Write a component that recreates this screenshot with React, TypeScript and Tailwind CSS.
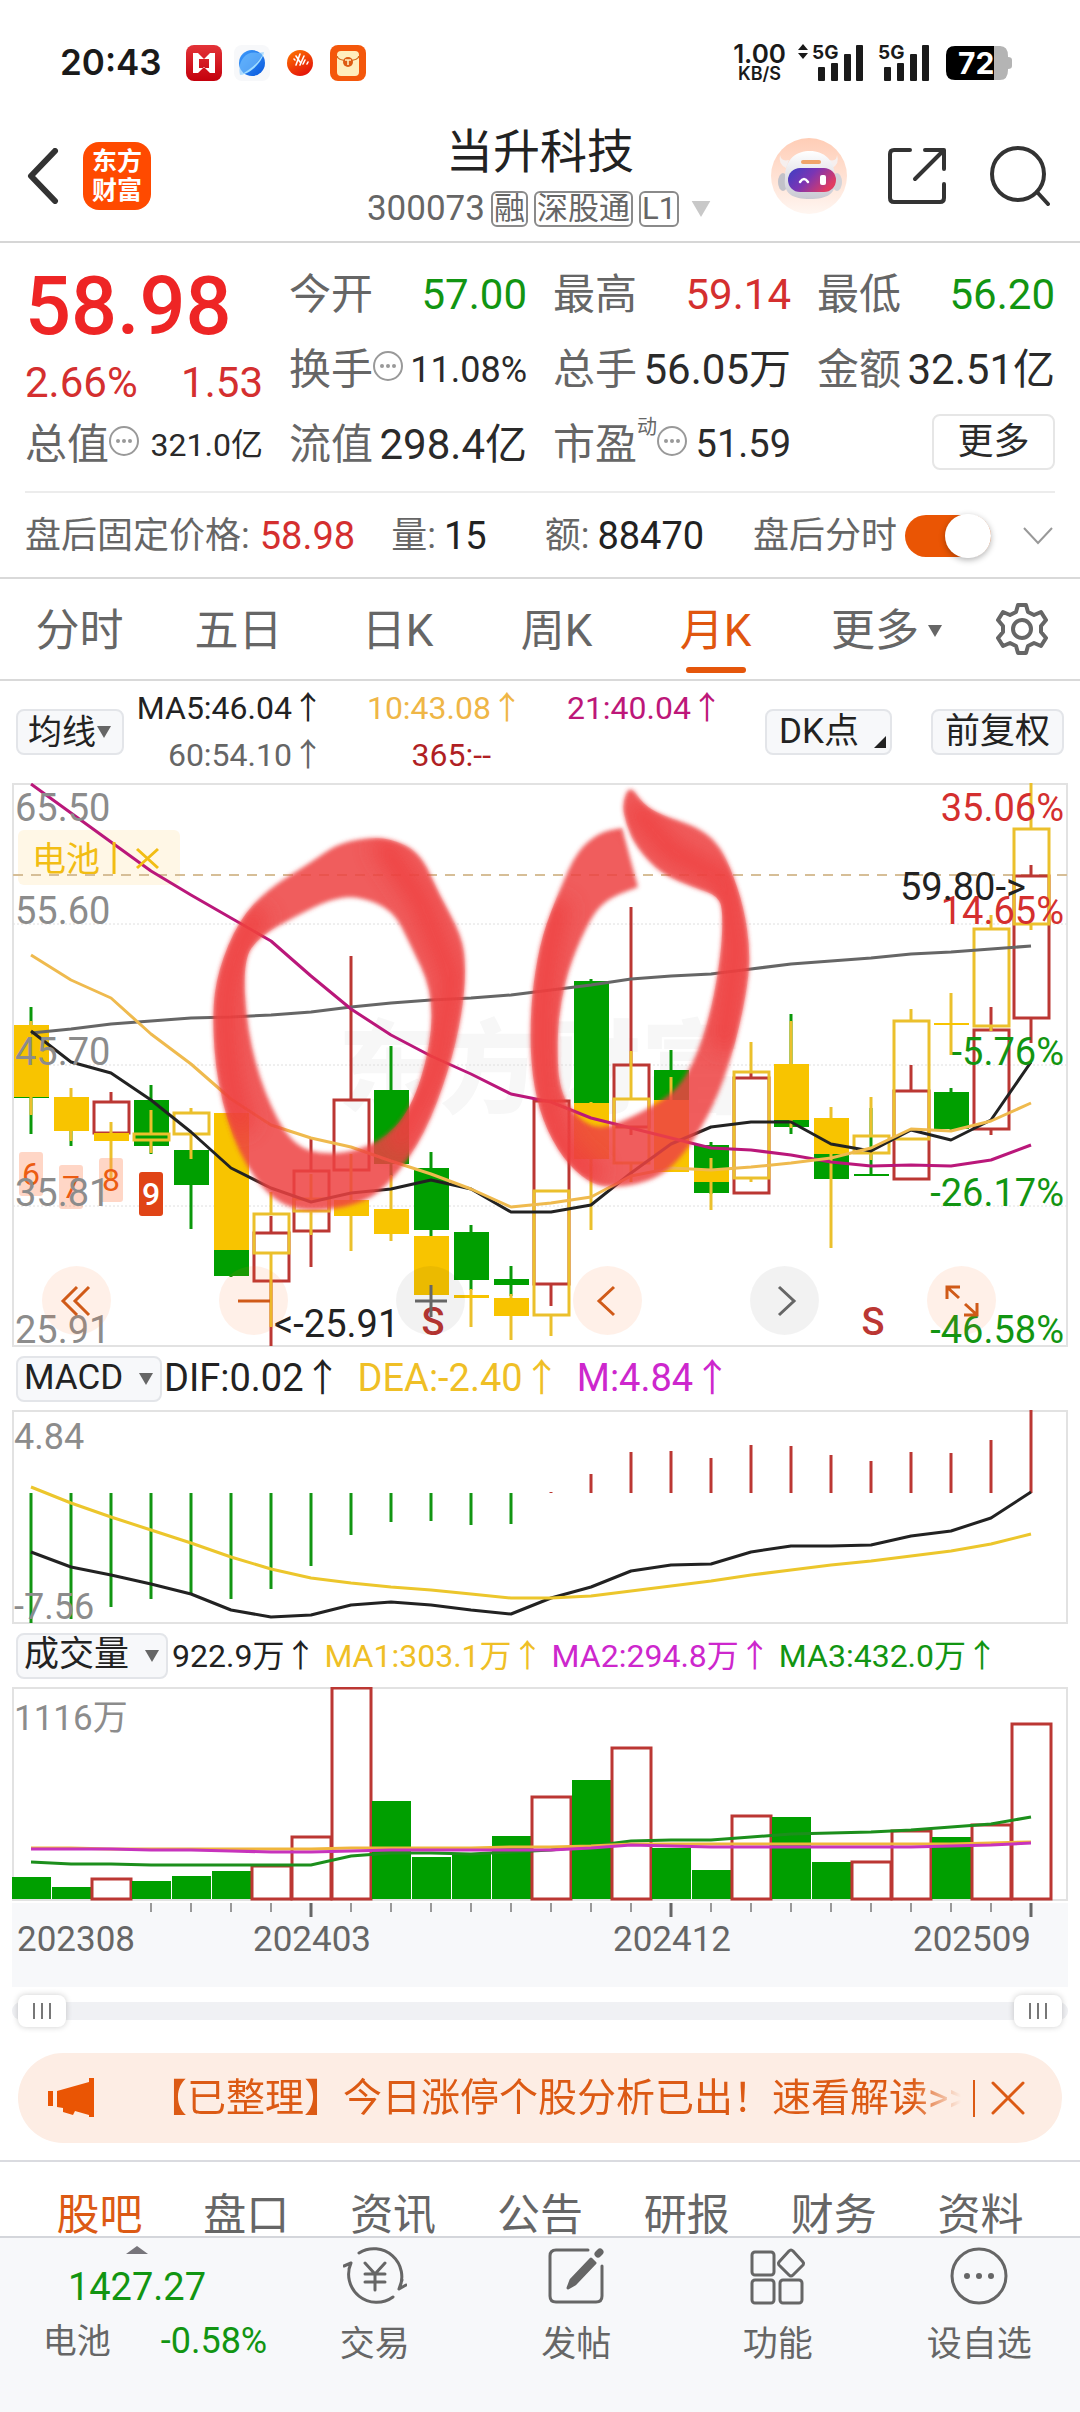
import { type ReactNode } from 'react';

type Point = [number, number];

/* ---------- chart data, in chart units: one candle every 40 units ---------- */

const FIRST_X = 31;
const STEP = 40;
const cx = (i: number) => FIRST_X + i * STEP;

const series = (ys: number[]) => ys.map((y, i) => `${cx(i)},${y}`).join(' ');

type Kind = 'up' | 'down';
// [index, kind, high, bodyTop, bodyBottom, low]
type Candle = [number, Kind, number, number, number, number];

const stock: Candle[] = [
  [0, 'down', 1007, 1035, 1098, 1134],
  [1, 'down', 1100, 1105, 1130, 1146],
  [2, 'up', 1092, 1102, 1133, 1133],
  [3, 'down', 1085, 1100, 1146, 1154],
  [4, 'down', 1150, 1150, 1185, 1229],
  [5, 'down', 1200, 1200, 1276, 1277],
  [6, 'up', 1216, 1233, 1281, 1346],
  [7, 'up', 1139, 1171, 1231, 1267],
  [8, 'up', 956, 1100, 1170, 1170],
  [9, 'down', 1046, 1090, 1164, 1176],
  [10, 'down', 1152, 1168, 1230, 1236],
  [11, 'down', 1225, 1232, 1280, 1290],
  [12, 'down', 1266, 1279, 1285, 1296],
  [13, 'up', 1101, 1101, 1284, 1306],
  [14, 'down', 979, 981, 1110, 1110],
  [15, 'up', 907, 1065, 1127, 1135],
  [16, 'down', 1050, 1070, 1110, 1110],
  [17, 'down', 1142, 1145, 1193, 1194],
  [18, 'up', 1072, 1078, 1193, 1194],
  [19, 'down', 1014, 1070, 1127, 1134],
  [20, 'down', 1120, 1120, 1179, 1179],
  [21, 'down', 1108, 1174, 1176, 1176],
  [22, 'up', 1065, 1091, 1179, 1180],
  [23, 'down', 1088, 1092, 1129, 1130],
  [24, 'up', 1007, 1030, 1129, 1135],
  [25, 'up', 865, 876, 1018, 1043],
];

const sector: Candle[] = [
  [0, 'down', 1021, 1025, 1097, 1115],
  [1, 'down', 1088, 1097, 1131, 1141],
  [2, 'down', 1122, 1133, 1141, 1179],
  [3, 'up', 1110, 1134, 1140, 1153],
  [4, 'up', 1108, 1113, 1134, 1159],
  [5, 'down', 1113, 1113, 1250, 1250],
  [6, 'up', 1192, 1214, 1253, 1327],
  [7, 'up', 1174, 1199, 1211, 1235],
  [8, 'down', 1154, 1200, 1216, 1251],
  [9, 'down', 1175, 1209, 1234, 1241],
  [10, 'down', 1236, 1236, 1295, 1295],
  [11, 'down', 1289, 1295, 1298, 1327],
  [12, 'down', 1294, 1298, 1316, 1340],
  [13, 'up', 1191, 1191, 1315, 1336],
  [14, 'down', 1102, 1103, 1159, 1230],
  [15, 'up', 1051, 1099, 1163, 1182],
  [16, 'down', 1077, 1100, 1172, 1172],
  [17, 'down', 1158, 1170, 1182, 1210],
  [18, 'up', 1042, 1072, 1178, 1182],
  [19, 'down', 1021, 1064, 1120, 1128],
  [20, 'down', 1107, 1118, 1154, 1248],
  [21, 'up', 1097, 1136, 1153, 1160],
  [22, 'up', 1009, 1021, 1139, 1139],
  [23, 'down', 993, 1023, 1025, 1055],
  [24, 'up', 915, 929, 1026, 1031],
  [25, 'up', 783, 829, 924, 930],
];

const ma5 = [1031, 1062, 1073, 1100, 1132, 1168, 1188, 1202, 1193, 1189, 1180, 1189, 1212, 1212, 1205, 1173, 1144, 1127, 1122, 1122, 1144, 1151, 1130, 1140, 1120, 1062];
const ma10 = [955, 980, 998, 1034, 1064, 1099, 1125, 1138, 1147, 1161, 1174, 1189, 1207, 1203, 1197, 1176, 1168, 1170, 1167, 1163, 1158, 1148, 1129, 1131, 1121, 1103];
const ma21 = [784, 813, 842, 871, 895, 918, 941, 976, 1009, 1035, 1056, 1074, 1094, 1102, 1118, 1128, 1138, 1148, 1150, 1155, 1162, 1166, 1165, 1166, 1160, 1145];
const ma60 = [1033, 1029, 1024, 1021, 1018, 1017, 1015, 1012, 1007, 1003, 1000, 998, 995, 990, 985, 979, 976, 974, 969, 964, 961, 958, 954, 952, 949, 946];

const macdBars = [1623, 1619, 1607, 1599, 1594, 1599, 1589, 1566, 1535, 1522, 1521, 1525, 1524, 1492, 1474, 1452, 1451, 1458, 1445, 1446, 1455, 1461, 1452, 1453, 1440, 1410];
const dif = [1552, 1567, 1575, 1584, 1594, 1610, 1617, 1615, 1605, 1602, 1605, 1610, 1614, 1598, 1587, 1571, 1565, 1564, 1552, 1546, 1546, 1545, 1536, 1531, 1518, 1492];
const dea = [1487, 1503, 1517, 1530, 1543, 1557, 1569, 1578, 1583, 1587, 1590, 1594, 1598, 1598, 1596, 1591, 1586, 1581, 1575, 1570, 1565, 1561, 1556, 1551, 1544, 1534];

const volumes: [number, Kind][] = [
  [1877, 'down'], [1887, 'down'], [1879, 'up'], [1881, 'down'], [1876, 'down'], [1871, 'down'], [1866, 'up'],
  [1837, 'up'], [1688, 'up'], [1801, 'down'], [1857, 'down'], [1854, 'down'], [1836, 'down'], [1797, 'up'],
  [1780, 'down'], [1748, 'up'], [1848, 'down'], [1870, 'down'], [1816, 'up'], [1817, 'down'], [1862, 'down'],
  [1862, 'up'], [1831, 'up'], [1837, 'down'], [1825, 'up'], [1724, 'up'],
];
const vma1 = [1848, 1848, 1849, 1849, 1849, 1849, 1849, 1849, 1848, 1848, 1848, 1848, 1847, 1847, 1846, 1844, 1844, 1844, 1844, 1844, 1844, 1844, 1844, 1844, 1843, 1842];
const vma2 = [1849, 1849, 1849, 1850, 1850, 1851, 1852, 1852, 1851, 1850, 1850, 1850, 1850, 1850, 1848, 1845, 1846, 1847, 1847, 1847, 1847, 1847, 1847, 1846, 1845, 1843];
const vma3 = [1862, 1864, 1864, 1865, 1865, 1865, 1865, 1865, 1856, 1853, 1853, 1854, 1852, 1850, 1846, 1841, 1840, 1840, 1837, 1834, 1833, 1832, 1830, 1827, 1824, 1817];

const ringOuter: Point[] = [[365, 838], [389, 838], [420, 852], [439, 894], [462, 936], [466, 969], [462, 1015], [449, 1070], [425, 1134], [393, 1180], [365, 1203], [310, 1213], [272, 1201], [238, 1154], [217, 1084], [212, 1015], [218, 970], [239, 920], [268, 889], [310, 863], [337, 844]];
const ringInner: Point[] = [[358, 896], [393, 910], [410, 944], [432, 990], [431, 1045], [411, 1110], [379, 1144], [331, 1156], [292, 1146], [264, 1093], [247, 1030], [243, 960], [260, 936], [296, 916], [331, 899]];
const hook: Point[] = [[622, 828], [622, 828], [600, 832], [577, 851], [560, 889], [542, 935], [533, 984], [530, 1030], [532, 1076], [542, 1120], [563, 1159], [588, 1182], [609, 1188], [640, 1184], [668, 1172], [696, 1138], [720, 1092], [737, 1038], [748, 984], [750, 950], [744, 908], [730, 866], [716, 841], [695, 826], [661, 815], [643, 804], [630, 785], [622, 803], [626, 824], [636, 847], [661, 874], [695, 888], [719, 896], [723, 915], [721, 954], [712, 1007], [698, 1053], [678, 1090], [643, 1112], [602, 1130], [579, 1120], [559, 1091], [557, 1038], [561, 1000], [571, 961], [592, 915], [609, 898], [638, 887], [638, 887]];

function smooth(points: Point[]) {
  const n = points.length;
  const mid = (a: Point, b: Point) => `${(a[0] + b[0]) / 2} ${(a[1] + b[1]) / 2}`;
  let d = `M${mid(points[n - 1], points[0])}`;
  points.forEach((p, i) => {
    d += `Q${p[0]} ${p[1]} ${mid(p, points[(i + 1) % n])}`;
  });
  return d + 'Z';
}

/* ---------- small pieces ---------- */

function CandleMark({ c, line, fill }: { c: Candle; line: string; fill: string }) {
  const [i, kind, high, top, bottom, low] = c;
  const x = cx(i);
  return (
    <g stroke={line} strokeWidth="3">
      {high < top && <path d={`M${x} ${high}V${top}`} />}
      {low > bottom && <path d={`M${x} ${bottom}V${low}`} />}
      {kind === 'up' ? (
        <rect x={x - 17} y={top} width="35" height={bottom - top} fill="none" />
      ) : (
        <rect x={x - 17} y={top} width="35" height={bottom - top} fill={fill} stroke="none" />
      )}
    </g>
  );
}

function Triangle({ className }: { className: string }) {
  return (
    <svg viewBox="0 0 14 12" className={className} aria-hidden="true">
      <path d="M0 0H14L7 12Z" fill="currentColor" />
    </svg>
  );
}

function InfoDots() {
  return (
    <svg viewBox="0 0 30 30" className="mb-2 h-[30px] w-[30px] shrink-0 text-[#999]" aria-hidden="true">
      <circle cx="15" cy="15" r="14" fill="none" stroke="currentColor" strokeWidth="2" />
      <circle cx="9" cy="15" r="2" fill="currentColor" />
      <circle cx="15" cy="15" r="2" fill="currentColor" />
      <circle cx="21" cy="15" r="2" fill="currentColor" />
    </svg>
  );
}

function Stat({ label, value, tone = 'text-[#2a2a2a]', size = 'text-[42px]', dots, sup }: {
  label: string;
  value: string;
  tone?: string;
  size?: string;
  dots?: boolean;
  sup?: string;
}) {
  return (
    <div className="flex h-[75px] items-center justify-between whitespace-nowrap">
      <div className="flex items-center">
        <span className="text-[42px] text-[#666]">{label}</span>
        {sup && <span className="mb-9 text-[20px] text-[#666]">{sup}</span>}
        {dots && <InfoDots />}
      </div>
      <span className={`${size} ${tone}`}>{value}</span>
    </div>
  );
}

function Signal({ arrows }: { arrows?: boolean }) {
  return (
    <svg viewBox="0 -8 66 54" className="h-[54px] w-[66px]" fill="#1a1a1a" aria-hidden="true">
      {arrows && <path d="M0 6L5 0L10 6ZM0 9H10L5 15Z" />}
      <text x="14" y="15" fontSize="19" fontWeight="700" className="font-['Inter',sans-serif]">5G</text>
      <rect x="20" y="23" width="7" height="14" rx="1" />
      <rect x="33" y="19" width="7" height="18" rx="1" />
      <rect x="46" y="10" width="7" height="27" rx="1" />
      <rect x="58" y="1" width="7" height="36" rx="1" />
    </svg>
  );
}

function StatusBar() {
  return (
    <div className="flex h-[125px] items-center pr-[68px] pl-[60px]">
      <span className="font-['Inter',sans-serif] text-[35px] font-semibold text-[#1a1a1a]">20:43</span>
      <div className="ml-6 flex items-center gap-3">
        <svg viewBox="0 0 36 36" className="h-9 w-9" aria-hidden="true">
          <defs>
            <linearGradient id="app1" x2="0" y2="1"><stop stopColor="#e33338" /><stop offset="1" stopColor="#c4000c" /></linearGradient>
          </defs>
          <rect width="36" height="36" rx="8" fill="url(#app1)" />
          <path d="M7 8H12L18 14L24 8H29V28H24L18 22L12 28H7ZM13 14V23H23V14Z" fill="#fff" fillRule="evenodd" />
        </svg>
        <svg viewBox="0 0 36 36" className="h-9 w-9" aria-hidden="true">
          <defs>
            <linearGradient id="app2" x2="1" y2="1"><stop stopColor="#3f9dfb" /><stop offset="1" stopColor="#0757dd" /></linearGradient>
          </defs>
          <rect width="36" height="36" rx="8" fill="#f7f8fa" />
          <circle cx="18" cy="18" r="13" fill="url(#app2)" />
          <path d="M30 7C25 17 16 26 6 30C3 16 12 5 24 8Z" fill="#7cc4ff" opacity=".6" />
          <path d="M30 7C29 16 17 29 6 30C17 25 26 16 30 7Z" fill="#9fdcff" />
        </svg>
        <svg viewBox="0 0 36 36" className="h-9 w-9" aria-hidden="true">
          <defs>
            <linearGradient id="app3" x2=".6" y2="1"><stop stopColor="#ff7a00" /><stop offset="1" stopColor="#e5160a" /></linearGradient>
          </defs>
          <circle cx="18" cy="18" r="13" fill="url(#app3)" />
          <path d="M12 14L13 15M14 11L18 17M18 9L14 20M22 11L18 20M23 15L21 19M26 17L25 19" stroke="#fff" strokeWidth="1.6" strokeLinecap="round" />
        </svg>
        <svg viewBox="0 0 36 36" className="h-9 w-9" aria-hidden="true">
          <rect width="36" height="36" rx="8" fill="#f4570b" />
          <rect x="7" y="6" width="22" height="25" rx="4" fill="#ffedbd" />
          <path d="M7 11C8 17 28 17 29 11" fill="none" stroke="#d2691e" strokeWidth="1.5" />
          <circle cx="18" cy="17" r="5" fill="#dd5a12" />
          <path d="M15 15H21M18 15V20" stroke="#ffedbd" strokeWidth="1.6" />
        </svg>
      </div>
      <div className="ml-auto flex items-center font-['Inter',sans-serif] text-[#1a1a1a]">
        <div className="flex flex-col items-center">
          <span className="text-[26px] leading-[22px] font-semibold">1.00</span>
          <span className="text-[18px] leading-[18px] font-semibold">KB/S</span>
        </div>
        <div className="ml-3 flex"><Signal arrows /><Signal /></div>
        <svg viewBox="0 0 66 34" className="ml-4 h-[34px] w-[66px] overflow-visible" aria-label="电量 72%">
          <path d="M48 0H54Q62 0 62 10V11Q66 11 66 14V20Q66 23 62 23V24Q62 34 54 34H48Z" fill="#b4b4b4" />
          <path d="M48 0H9Q0 0 0 9V25Q0 34 9 34H48Z" fill="#000" />
          <text x="12" y="28" fontSize="30" fontWeight="700" fill="#fff">72</text>
        </svg>
      </div>
    </div>
  );
}

function Badge({ children }: { children: ReactNode }) {
  return (
    <span className="flex h-9 items-center rounded-md border-2 border-[#8a8a8a] px-px text-[31px] leading-8">{children}</span>
  );
}

function Header() {
  return (
    <header className="grid h-[118px] grid-cols-[1fr_auto_1fr] items-center border-b-2 border-[#d6d6d6] pb-4">
      <div className="flex items-center pl-[27px]">
        <button aria-label="返回">
          <svg viewBox="0 0 32 56" className="h-14 w-8" fill="none" stroke="#333" strokeWidth="6" strokeLinecap="round" strokeLinejoin="round">
            <path d="M28 3L4 28L28 53" />
          </svg>
        </button>
        <a href="#home" className="ml-6 flex h-[68px] w-[68px] flex-col items-center justify-center rounded-2xl bg-[#ff4a00] text-[25px] leading-[29px] font-bold text-white">
          <span>东方</span>
          <span>财富</span>
        </a>
      </div>
      <div className="flex flex-col items-center">
        <h1 className="text-[47px] leading-[54px] text-[#222]">当升科技</h1>
        <div className="mt-3 flex h-9 items-center gap-1.5 text-[35px] text-[#666]">
          <span>300073</span>
          <Badge>融</Badge>
          <Badge>深股通</Badge>
          <Badge>L1</Badge>
          <button aria-label="切换" className="ml-1 text-[#c8c8c8]"><Triangle className="h-4 w-6" /></button>
        </div>
      </div>
      <div className="flex items-center justify-end pr-[30px]">
        <button aria-label="智能助手">
          <svg viewBox="0 0 76 76" className="h-[76px] w-[76px]">
            <defs>
              <linearGradient id="halo" x2="0" y2="1"><stop stopColor="#ffcdb6" /><stop offset="1" stopColor="#fff6f1" /></linearGradient>
              <linearGradient id="visor" x2="1" y2=".5"><stop stopColor="#3b3fc4" /><stop offset=".5" stopColor="#7a35b4" /><stop offset="1" stopColor="#e03b62" /></linearGradient>
              <linearGradient id="shell" x2="0" y2="1"><stop stopColor="#ffffff" /><stop offset="1" stopColor="#c9c9d2" /></linearGradient>
            </defs>
            <circle cx="38" cy="38" r="38" fill="url(#halo)" />
            <path d="M9 17Q10 24 18 22L15 30Q7 26 9 17ZM66 17Q66 24 58 22L61 30Q69 26 66 17Z" fill="#f6efee" />
            <ellipse cx="12" cy="44" rx="5" ry="9" fill="#c2c2c9" />
            <ellipse cx="66" cy="44" rx="5" ry="9" fill="#d3d3d9" />
            <path d="M14 40C14 20 26 13 39 13C53 13 64 22 64 40C66 56 56 61 39 61C22 61 12 56 14 40Z" fill="url(#shell)" />
            <rect x="30" y="22" width="20" height="4" rx="2" fill="#f0a56a" />
            <rect x="17" y="30" width="48" height="24" rx="12" fill="url(#visor)" />
            <path d="M29 44Q33 38 37 44" fill="none" stroke="#fff" strokeWidth="2.5" strokeLinecap="round" />
            <rect x="49" y="37" width="6" height="10" rx="2" fill="#fff" />
          </svg>
        </button>
        <button aria-label="分享" className="ml-[41px]">
          <svg viewBox="0 0 58 58" className="h-[58px] w-[58px]" fill="none" stroke="#333" strokeWidth="4" strokeLinecap="round" strokeLinejoin="round">
            <path d="M22 3H6Q2 3 2 7V51Q2 55 6 55H52Q56 55 56 51V37M37 3H56V22M55 4L27 32" />
          </svg>
        </button>
        <button aria-label="搜索" className="ml-11">
          <svg viewBox="0 0 60 60" className="h-[60px] w-[60px]" fill="none" stroke="#333" strokeWidth="4" strokeLinecap="round">
            <circle cx="28" cy="28" r="26" />
            <path d="M47 46L58 58" />
          </svg>
        </button>
      </div>
    </header>
  );
}

const RED = 'text-[#d42f2f]';
const GREEN = 'text-[#129512]';

function Quote() {
  return (
    <section className="px-[25px] pt-[14px]">
      <div className="grid grid-cols-4 gap-x-[26px]">
        <div>
          <div className="flex h-[100px] items-center text-[81px] font-medium text-[#ee2525]">58.98</div>
          <div className={`flex h-[50px] items-center justify-between text-[42px] ${RED}`}>
            <span>2.66%</span>
            <span>1.53</span>
          </div>
          <Stat label="总值" value="321.0亿" size="text-[32px]" dots />
        </div>
        <div>
          <Stat label="今开" value="57.00" tone={GREEN} />
          <Stat label="换手" value="11.08%" size="text-[36px]" dots />
          <Stat label="流值" value="298.4亿" />
        </div>
        <div>
          <Stat label="最高" value="59.14" tone={RED} />
          <Stat label="总手" value="56.05万" />
          <Stat label="市盈" value="51.59" size="text-[38px]" dots sup="动" />
        </div>
        <div>
          <Stat label="最低" value="56.20" tone={GREEN} />
          <Stat label="金额" value="32.51亿" />
          <div className="flex h-[70px] items-center justify-end">
            <button className="h-14 w-[123px] rounded-lg border-2 border-[#e6e6e6] text-[36px] leading-[50px] text-[#2a2a2a]">更多</button>
          </div>
        </div>
      </div>
      <div className="mt-[9px] flex h-[86px] items-center border-t-2 border-[#ececec] pt-0.5 text-[36px] whitespace-nowrap text-[#666]">
        <span>盘后固定价格:</span>
        <span className={`ml-2.5 text-[38px] ${RED}`}>58.98</span>
        <span className="ml-9">量:</span>
        <span className="ml-2 text-[38px] text-[#222]">15</span>
        <span className="ml-[58px]">额:</span>
        <span className="ml-2 text-[38px] text-[#222]">88470</span>
        <label className="ml-auto flex items-center gap-2">
          盘后分时
          <input type="checkbox" defaultChecked className="peer sr-only" />
          <span className="flex h-[42px] w-[86px] items-center justify-end rounded-full bg-[#ea5504]">
            <span className="h-[44px] w-[46px] rounded-full bg-white shadow-[0_2px_6px_rgba(0,0,0,0.3)]" />
          </span>
        </label>
        <button aria-label="展开" className="mr-0.5 ml-8">
          <svg viewBox="0 0 30 18" className="h-[18px] w-[30px]" fill="none" stroke="#999" strokeWidth="2">
            <path d="M1 1L15 16L29 1" />
          </svg>
        </button>
      </div>
    </section>
  );
}

function PeriodTabs() {
  return (
    <nav className="grid h-[104px] grid-cols-[159fr_159fr_159fr_159fr_159fr_180fr_93fr] items-center border-y-2 border-[#d9d9d9] pr-3 text-[44px] text-[#666]">
      {['分时', '五日', '日K', '周K'].map((t) => (
        <button key={t} className="h-full pt-1">{t}</button>
      ))}
      <button className="relative h-full pt-1 text-[#e0560f]">
        月K
        <span className="absolute bottom-1.5 left-1/2 h-1.5 w-[60px] -translate-x-1/2 rounded-full bg-[#e5560b]" />
      </button>
      <button className="flex h-full items-center justify-center gap-2 pt-1 pl-1">更多<Triangle className="h-3 w-4" /></button>
      <button aria-label="设置" className="flex justify-center">
        <svg viewBox="0 0 54 54" className="h-[54px] w-[54px]" fill="none" stroke="#666" strokeWidth="4" strokeLinejoin="round">
          <path d="M23 3H31L33 10L39 13L46 10L51 18L46 24V30L51 36L46 44L39 41L33 44L31 51H23L21 44L15 41L8 44L3 36L8 30V24L3 18L8 10L15 13L21 10Z" />
          <circle cx="27" cy="27" r="9" />
        </svg>
      </button>
    </nav>
  );
}

const CHIP = 'flex h-[46px] items-center rounded-lg border-2 border-[#e3e5e9] bg-[#f7f8fa] text-[#222]';

function MaRow() {
  return (
    <div className="flex h-[102px] items-center justify-between px-4">
      <div className="flex items-center">
        <button className={`${CHIP} w-[108px] justify-center text-[34px]`}>均线<Triangle className="h-3 w-4 text-[#666]" /></button>
        <div className="ml-3 grid grid-cols-[188px_199px_200px] text-right text-[32px] leading-[47px] whitespace-nowrap">
          <span className="text-[#222]">MA5:46.04↑</span>
          <span className="text-[#efb646]">10:43.08↑</span>
          <span className="text-[#bd1779]">21:40.04↑</span>
          <span className="text-[#666]">60:54.10↑</span>
          <span className="pr-8 text-[#b01f24]">365:--</span>
        </div>
      </div>
      <div className="flex gap-[39px]">
        <button className={`${CHIP} w-[127px] justify-between pr-1 pl-3 text-[35px]`}>
          DK点
          <svg viewBox="0 0 12 12" className="mt-5 h-3 w-3" aria-hidden="true"><path d="M12 0V12H0Z" fill="#222" /></svg>
        </button>
        <button className={`${CHIP} w-[133px] justify-center text-[35px]`}>前复权</button>
      </div>
    </div>
  );
}

function RoundButton({ label, gray, children }: { label: string; gray?: boolean; children: ReactNode }) {
  return (
    <button
      aria-label={label}
      className={`flex h-[69px] w-[69px] items-center justify-center rounded-full ${gray ? 'bg-black/5 text-[#666]' : 'bg-[#ff6a1a]/10 text-[#d05a18]'}`}
    >
      <svg viewBox="0 0 34 34" className="h-[34px] w-[34px]" fill="none" stroke="currentColor" strokeWidth="3">{children}</svg>
    </button>
  );
}

const setupTags: [number, number, string][] = [[31, 1152, '6'], [71, 1165, '7'], [111, 1158, '8']];

function PriceChart() {
  return (
    <div className="relative px-3">
      <svg viewBox="12 783 1056 564" className="block w-full" fill="none" fontSize="38">
        <defs>
          <filter id="soft" x="-5%" y="-5%" width="110%" height="110%"><feGaussianBlur stdDeviation="2" /></filter>
          <filter id="softer" x="-50%" y="-50%" width="200%" height="200%"><feGaussianBlur stdDeviation="10" /></filter>
          <clipPath id="marks">
            <path d={smooth(ringOuter) + smooth(ringInner)} clipRule="evenodd" />
            <path d={smooth(hook)} />
          </clipPath>
        </defs>
        <text x="338" y="1105" fontSize="101" fontWeight="900" fill="#f7f7f7">东方财富</text>
        <rect x="13" y="784" width="1054" height="562" stroke="#e2e2e2" strokeWidth="2" />
        <path d="M13 924H1067M13 1065H1067M13 1206H1067" stroke="#dedede" strokeWidth="1" strokeDasharray="2 2" />
        <rect x="18" y="830" width="162" height="55" rx="6" fill="#fff7e6" />
        <path d="M13 875H1067" stroke="#d6be97" strokeWidth="2" strokeDasharray="10 8" />

        {stock.map((c) => (
          <CandleMark key={c[0]} c={c} line={c[1] === 'up' ? '#bb3733' : '#0a980a'} fill="#009f00" />
        ))}
        {sector.map((c) => (
          <CandleMark key={c[0]} c={c} line="#ebc02c" fill="#f8c400" />
        ))}

        <g strokeWidth="3" strokeLinejoin="round">
          <polyline points={series(ma60)} stroke="#666" />
          <polyline points={series(ma5)} stroke="#222" />
          <polyline points={series(ma21)} stroke="#ba177a" />
          <polyline points={series(ma10)} stroke="#efba4e" />
        </g>

        <g fill="#8c8c8c">
          {setupTags.map(([x, y]) => (
            <rect key={x} x={x - 12} y={y} width="24" height="44" rx="3" fill="#ff8a5c" opacity=".35" />
          ))}
          <rect x="139" y="1172" width="24" height="44" rx="3" fill="#e04416" />
          <g fontSize="32" textAnchor="middle" fill="#ec5c12">
            {setupTags.map(([x, y, n]) => (
              <text key={n} x={x} y={y + 33}>{n}</text>
            ))}
            <text x="151" y="1205" fontWeight="500" fill="#fff">9</text>
          </g>
          <text x="15" y="821">65.50</text>
          <text x="15" y="924">55.60</text>
          <text x="15" y="1065">45.70</text>
          <text x="15" y="1206">35.81</text>
          <text x="15" y="1343">25.91</text>
        </g>

        <g textAnchor="end" fill="#d42f2f">
          <text x="1064" y="821">35.06%</text>
          <text x="1064" y="924">14.65%</text>
          <g fill="#129512">
            <text x="1064" y="1065">-5.76%</text>
            <text x="1064" y="1206">-26.17%</text>
            <text x="1064" y="1343">-46.58%</text>
          </g>
        </g>
        <text x="900" y="900" fill="#222">59.80-&gt;</text>
        <text x="274" y="1337" fill="#222">&lt;-25.91</text>
        <text x="433" y="1335" fontWeight="500" textAnchor="middle" fill="#bb3733">S</text>
        <text x="873" y="1335" fontWeight="500" textAnchor="middle" fill="#bb3733">S</text>

        <g fill="#f2bd14">
          <text x="32" y="871" fontSize="34">电池</text>
          <path d="M114 842V874M137 849L158 868M158 849L137 868" stroke="#f2bd14" strokeWidth="3" />
        </g>

        <g filter="url(#soft)">
          <path d={smooth(ringOuter) + smooth(ringInner)} fillRule="evenodd" fill="#ee4444" opacity=".86" />
          <path d={smooth(hook)} fill="#ee4444" opacity=".86" />
        </g>
        <g clipPath="url(#marks)">
          <g filter="url(#softer)" stroke="#ee3c3c" strokeWidth="24" opacity=".75">
            <path d="M380 840L420 900L452 980L436 1070L395 1150" />
            <path d="M262 910Q222 960 226 1030T246 1130" />
            <path d="M632 805L670 850L725 880L736 950L722 1050" />
            <path d="M560 900Q536 1000 545 1080T600 1175" />
          </g>
        </g>
      </svg>
      <div className="absolute right-[84px] bottom-3 left-[42px] flex justify-between">
        <RoundButton label="最左"><path d="M17 3L3 17L17 31M29 3L15 17L29 31" /></RoundButton>
        <RoundButton label="缩小"><path d="M1 17H33" /></RoundButton>
        <RoundButton label="放大" gray><path d="M1 17H33M17 1V33" /></RoundButton>
        <RoundButton label="左移"><path d="M23 3L8 17L23 31" /></RoundButton>
        <RoundButton label="右移" gray><path d="M11 3L26 17L11 31" /></RoundButton>
        <RoundButton label="全屏"><path d="M2 15V3H15M3 4L14 14M32 19V31H19M31 30L20 20" /></RoundButton>
      </div>
    </div>
  );
}

function MacdPanel() {
  return (
    <section>
      <div className="flex h-[63px] items-center px-4 text-[38px] whitespace-nowrap">
        <button className={`${CHIP} w-[146px] justify-between px-1.5 text-[35px]`}>MACD<Triangle className="h-3 w-4 text-[#666]" /></button>
        <div className="ml-0.5 flex gap-4">
          <span className="text-[#222]">DIF:0.02↑</span>
          <span className="text-[#efbf26]">DEA:-2.40↑</span>
          <span className="text-[#cd27cd]">M:4.84↑</span>
        </div>
      </div>
      <div className="px-3">
        <svg viewBox="12 1410 1056 214" className="block w-full" fill="none" fontSize="36">
          <rect x="13" y="1411" width="1054" height="212" stroke="#e2e2e2" strokeWidth="2" />
          {macdBars.map((y, i) => (
            <path key={i} d={`M${cx(i)} 1493V${y}`} stroke={y > 1493 ? '#129512' : '#bb3733'} strokeWidth="3" />
          ))}
          <polyline points={series(dif)} stroke="#222" strokeWidth="3" strokeLinejoin="round" />
          <polyline points={series(dea)} stroke="#ecc62c" strokeWidth="3" strokeLinejoin="round" />
          <text x="14" y="1449" fill="#8c8c8c">4.84</text>
          <text x="14" y="1619" fill="#8c8c8c">-7.56</text>
        </svg>
      </div>
    </section>
  );
}

function VolumePanel() {
  return (
    <section>
      <div className="flex h-[63px] items-center px-4 text-[32px] whitespace-nowrap">
        <button className={`${CHIP} w-[152px] justify-between px-1.5 text-[35px]`}>成交量<Triangle className="h-3 w-4 text-[#666]" /></button>
        <div className="ml-1 flex gap-2">
          <span className="text-[#222]">922.9万↑</span>
          <span className="text-[#efbf26]">MA1:303.1万↑</span>
          <span className="text-[#cd27cd]">MA2:294.8万↑</span>
          <span className="text-[#129512]">MA3:432.0万↑</span>
        </div>
      </div>
      <div className="px-3">
        <svg viewBox="12 1687 1056 300" className="block w-full" fill="none" fontSize="36">
          <rect x="13" y="1688" width="1054" height="212" stroke="#e2e2e2" strokeWidth="2" />
          {volumes.map(([y, kind], i) =>
            kind === 'up' ? (
              <rect key={i} x={cx(i) - 19} y={y} width="39" height={1899 - y} stroke="#bb3733" strokeWidth="3" />
            ) : (
              <rect key={i} x={cx(i) - 19} y={y} width="39" height={1899 - y} fill="#009f00" />
            ),
          )}
          <polyline points={series(vma3)} stroke="#1c8f1c" strokeWidth="3" />
          <polyline points={series(vma1)} stroke="#f0b63c" strokeWidth="3" />
          <polyline points={series(vma2)} stroke="#c733bd" strokeWidth="3" />
          <text x="14" y="1730" fontSize="35" fill="#8c8c8c">1116万</text>
          <rect x="12" y="1903" width="1056" height="84" fill="#f7f8fa" />
          {volumes.map((_, i) =>
            i < 3 ? null : i % 9 === 7 ? (
              <path key={i} d={`M${cx(i)} 1903V1917`} stroke="#666" strokeWidth="3" />
            ) : (
              <path key={i} d={`M${cx(i)} 1903V1912`} stroke="#999" strokeWidth="2" />
            ),
          )}
          <g fill="#666" fontSize="35">
            <text x="17" y="1951">202308</text>
            <text x="312" y="1951" textAnchor="middle">202403</text>
            <text x="672" y="1951" textAnchor="middle">202412</text>
            <text x="1031" y="1951" textAnchor="end">202509</text>
          </g>
        </svg>
      </div>
    </section>
  );
}

const RANGE =
  'h-8 min-w-0 flex-1 appearance-none bg-transparent [&::-webkit-slider-thumb]:h-8 [&::-webkit-slider-thumb]:w-12 [&::-webkit-slider-thumb]:appearance-none [&::-webkit-slider-thumb]:rounded-lg [&::-webkit-slider-thumb]:bg-white [&::-webkit-slider-thumb]:bg-[repeating-linear-gradient(90deg,#777_0_2px,#fff_2px_8px)] [&::-webkit-slider-thumb]:bg-[length:18px_16px] [&::-webkit-slider-thumb]:bg-center [&::-webkit-slider-thumb]:bg-no-repeat [&::-webkit-slider-thumb]:shadow-[0_0_6px_rgba(0,0,0,0.2)]';

function RangeSlider() {
  return (
    <div className="flex h-12 items-center px-3">
      <div className="flex h-[18px] w-full items-center rounded-full bg-[#f0f1f4] px-1.5">
        <input type="range" aria-label="起始月份" min="0" max="100" defaultValue="0" className={RANGE} />
        <input type="range" aria-label="结束月份" min="0" max="100" defaultValue="100" className={RANGE} />
      </div>
    </div>
  );
}

function Banner() {
  return (
    <div className="mx-[18px] mt-[18px] flex h-[90px] items-center rounded-[45px] bg-[#fdede4] pr-[37px] pl-[30px] text-[#dc5a14]">
      <svg viewBox="0 0 46 40" className="h-10 w-[46px] shrink-0" fill="#ea5504" aria-hidden="true">
        <path d="M0 13H5V28H0ZM9 13L41 4V0H46V39H41V37L27 33L25 37L15 34V30L9 29Z" />
      </svg>
      <a href="#review" className="ml-[54px] min-w-0 flex-1 overflow-hidden text-[39px] whitespace-nowrap [mask-image:linear-gradient(90deg,#000_94%,transparent_100%)]">
        【已整理】今日涨停个股分析已出！速看解读&gt;&gt;
      </a>
      <span className="ml-3 h-[37px] w-0.5 bg-[#dc5a14]" />
      <button aria-label="关闭" className="ml-4">
        <svg viewBox="0 0 34 34" className="h-[34px] w-[34px]" stroke="currentColor" strokeWidth="3" strokeLinecap="round">
          <path d="M2 2L32 32M32 2L2 32" />
        </svg>
      </button>
    </div>
  );
}

function ContentTabs() {
  return (
    <nav className="mt-[17px] grid h-[76px] grid-cols-7 overflow-hidden border-t-2 border-[#dadbe0] px-[26px] pt-[23px] text-[43px] leading-[60px] text-[#666]">
      {['股吧', '盘口', '资讯', '公告', '研报', '财务', '资料'].map((t, i) => (
        <a key={t} href={`#tab-${i}`} className={i === 0 ? 'text-center text-[#dc5a14]' : 'text-center'}>{t}</a>
      ))}
    </nav>
  );
}

function NavItem({ label, children }: { label: string; children: ReactNode }) {
  return (
    <button className="flex flex-1 flex-col items-center text-[35px] leading-[50px]">
      <svg viewBox="0 0 64 64" className="mb-3 h-16 w-16" fill="none" stroke="currentColor" strokeWidth="3" strokeLinecap="round" strokeLinejoin="round">{children}</svg>
      {label}
    </button>
  );
}

function BottomBar() {
  return (
    <footer className="flex min-h-[174px] flex-1 items-start border-t-2 border-[#d4d6db] bg-[#f7f8fa] text-[#666]">
      <button className="flex w-[274px] shrink-0 flex-col items-center pt-2">
        <svg viewBox="0 0 22 8" className="h-2 w-[22px]" aria-hidden="true"><path d="M11 0L22 8H0Z" fill="#77757b" /></svg>
        <span className="mt-2 text-[38px] leading-[50px] text-[#129512]">1427.27</span>
        <span className="mt-1 flex items-center gap-[50px] pl-9 text-[34px] leading-[50px]">
          电池
          <span className="text-[36px] text-[#129512]">-0.58%</span>
        </span>
      </button>
      <div className="flex flex-1 pt-1.5">
        <NavItem label="交易">
          <path d="M16 9A28 28 0 0 1 56 45L63 41M50 53A28 28 0 0 1 8 19L1 22M56 45L59 36M8 19L6 25" />
          <path d="M22 19L32 30L42 19M32 30V46M22 30H42M22 38H42" />
        </NavItem>
        <NavItem label="发帖">
          <path d="M44 6H12Q6 6 6 12V52Q6 58 12 58H52Q58 58 58 52V22" />
          <path d="M24 44L27 36L47 15L51 19L31 40Z" fill="currentColor" />
          <path d="M54 10L56 8" strokeWidth="7" />
        </NavItem>
        <NavItem label="功能">
          <rect x="6" y="8" width="22" height="23" rx="3" />
          <rect x="6" y="36" width="22" height="23" rx="3" />
          <rect x="34" y="36" width="22" height="23" rx="3" />
          <path d="M43 7Q45 5 47 7L57 18Q58 19 57 21L47 31Q45 33 43 31L33 21Q32 19 33 18Z" />
        </NavItem>
        <NavItem label="设自选">
          <circle cx="32" cy="32" r="27" />
          <g fill="currentColor" stroke="none">
            <circle cx="20" cy="32" r="3" />
            <circle cx="32" cy="32" r="3" />
            <circle cx="44" cy="32" r="3" />
          </g>
        </NavItem>
      </div>
    </footer>
  );
}

export default function App() {
  return (
    <div className="flex min-h-screen flex-col bg-white font-['Roboto','Noto_Sans_CJK_SC',sans-serif]">
      <StatusBar />
      <Header />
      <Quote />
      <PeriodTabs />
      <MaRow />
      <PriceChart />
      <MacdPanel />
      <VolumePanel />
      <RangeSlider />
      <Banner />
      <ContentTabs />
      <BottomBar />
    </div>
  );
}
